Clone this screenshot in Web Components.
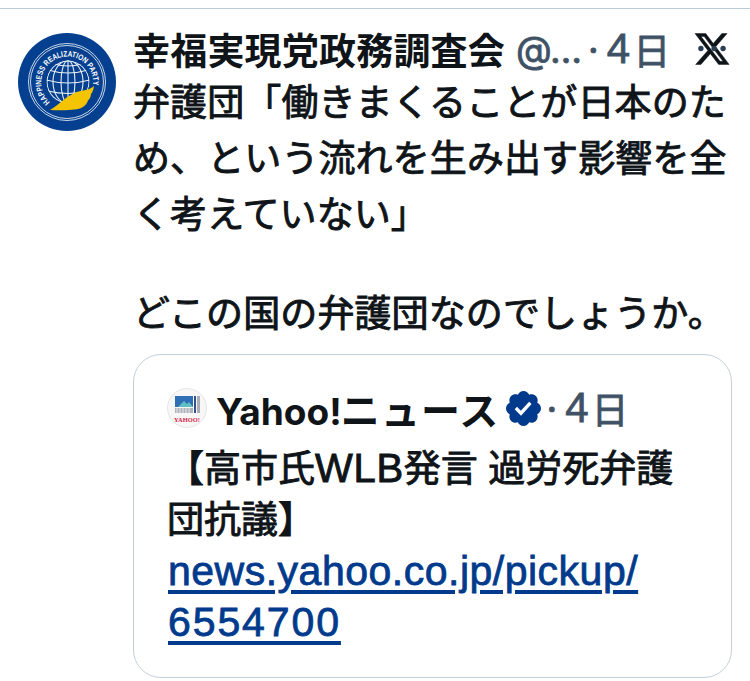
<!DOCTYPE html>
<html lang="ja">
<head>
<meta charset="utf-8">
<title>Tweet</title>
<style>
html, body { margin: 0; padding: 0; background: #fff; }
body {
    width: 750px; height: 681px; overflow: hidden;
    font-family: Inter, "Noto Sans CJK JP", sans-serif;
    color: #0f1419;
}
.latin { font-family: "Liberation Sans", sans-serif; font-size: 40px; letter-spacing: .7px; }
</style>
</head>
<body>
<tweet-card name="幸福実現党政務調査会" handle="@…" time="4日">
    弁護団「働きまくることが日本のた<br>め、という流れを生み出す影響を全<br>く考えていない」
    <p-gap></p-gap>
    どこの国の弁護団なのでしょうか。
    <quote-card slot="quote" name="ニュース" time="4日" href="news.yahoo.co.jp/pickup/|6554700">
        【高市氏<span class="latin">WLB</span>発言 過労死弁護<br>団抗議】
    </quote-card>
</tweet-card>

<script>
const BADGE = "M22.25 12c0-1.43-.88-2.67-2.19-3.34.46-1.39.2-2.9-.81-3.91s-2.52-1.27-3.91-.81c-.66-1.31-1.91-2.19-3.34-2.19s-2.67.88-3.33 2.19c-1.4-.46-2.91-.2-3.92.81s-1.26 2.52-.8 3.91c-1.31.67-2.2 1.91-2.2 3.34s.89 2.67 2.2 3.34c-.46 1.39-.21 2.9.8 3.91s2.52 1.26 3.91.81c.67 1.31 1.91 2.19 3.34 2.19s2.68-.88 3.34-2.19c1.39.45 2.9.2 3.91-.81s1.27-2.52.81-3.91c1.31-.67 2.19-1.91 2.19-3.34zm-11.71 4.2L6.8 12.46l1.41-1.42 2.26 2.26 4.8-5.23 1.47 1.36-6.2 6.77z";
const X_LOGO = "M18.244 2.25h3.308l-7.227 8.26 8.502 11.24H16.17l-5.214-6.817L4.99 21.75H1.68l7.73-8.835L1.254 2.25H8.08l4.713 6.231zm-1.161 17.52h1.833L7.084 4.126H5.117z";

class PGap extends HTMLElement {
    constructor() {
        super();
        this.attachShadow({ mode: "open" }).innerHTML = `<style>:host { display: block; height: 43px; }</style>`;
    }
}
customElements.define("p-gap", PGap);

class PartyLogo extends HTMLElement {
    constructor() {
        super();
        this.shadowDOM = this.attachShadow({ mode: "open" });
        this.shadowDOM.innerHTML = `
        <style>
        :host { display: block; width: 98px; height: 98px; flex: none; }
        svg { display: block; width: 100%; height: 100%; }
        text { font-family: "Liberation Sans", sans-serif; font-size: 8px; font-weight: 700; fill: #fff; }
        </style>
        <svg viewBox="0 0 98 98">
            <defs>
                <path id="ring" d="M32 69A26 26 0 1 1 75 53"></path>
                <clipPath id="ball"><circle cx="50" cy="49" r="21.500"></circle></clipPath>
            </defs>
            <circle cx="49" cy="49" r="49" fill="#04408f"></circle>
            <circle cx="49" cy="49" r="36.500" fill="none" stroke="#dfe8f3" stroke-width=".9"></circle>
            <circle cx="49" cy="49" r="38.500" fill="none" stroke="#dfe8f3" stroke-width=".9"></circle>
            <text><textPath href="#ring" textLength="106" lengthAdjust="spacingAndGlyphs">HAPPINESS REALIZATION PARTY</textPath></text>
            <g fill="none" stroke="#e8eff7" stroke-width="1.100" clip-path="url(#ball)">
                <circle cx="50" cy="49" r="21"></circle>
                <ellipse cx="50" cy="49" rx="7" ry="21.500"></ellipse>
                <ellipse cx="50" cy="49" rx="15" ry="21.500"></ellipse>
                <path d="M50 27V71M28 47Q50 53 72 47M30 37Q50 43 70 37M30 58Q50 63 70 58M36 31Q50 35 64 31"></path>
            </g>
            <path d="M32 77C42 71 48 63 59 59C66 57 72 57 76 53C75.500 57 74.500 59 73 61C73 64 71.500 66 70 67.500C69 70.500 67 73 64 74.500C60 77 50 77.500 32 77Z" fill="#f5c400"></path>
        </svg>`;
    }
}
customElements.define("party-logo", PartyLogo);

class YahooLogo extends HTMLElement {
    constructor() {
        super();
        this.shadowDOM = this.attachShadow({ mode: "open" });
        this.shadowDOM.innerHTML = `
        <style>
        :host { display: block; width: 40px; height: 40px; flex: none; }
        svg { display: block; width: 100%; height: 100%; }
        text { font-family: "Liberation Serif", serif; font-size: 6.400px; font-weight: 700; fill: #d5213f; }
        </style>
        <svg viewBox="0 0 40 40">
            <circle cx="20" cy="20" r="19.500" fill="#f7f7f8" stroke="#e4e6e9" stroke-width="1"></circle>
            <rect x="8" y="8" width="18" height="11" fill="#2f6fb5"></rect>
            <path d="M11 19L17 13L20 16L22 14L26 19Z" fill="#5fc0c4"></path>
            <rect x="27" y="8" width="2" height="17" fill="#33518a"></rect>
            <rect x="30" y="8" width="3" height="17" fill="#a9aeb5"></rect>
            <path d="M8 20H26V25H8Z" fill="#aeb3ba"></path>
            <path d="M10 20V25M13 20V25M16 20V25M19 20V25M22 20V25" stroke="#e8e9ec" stroke-width="1"></path>
            <text x="7" y="34" textLength="26">YAHOO!</text>
        </svg>`;
    }
}
customElements.define("yahoo-logo", YahooLogo);

class QuoteCard extends HTMLElement {
    constructor() {
        super();
        this.shadowDOM = this.attachShadow({ mode: "open" });
    }

    connectedCallback() {
        const [url1, url2] = this.getAttribute("href").split("|");
        this.shadowDOM.innerHTML = `
        <style>
        :host {
            display: block;
            width: 599px;
            box-sizing: border-box;
            height: 324px;
            border: 1px solid #c4d0d9;
            border-radius: 28px;
            padding: 33px 33px 0 33px;
        }
        .head { display: flex; align-items: center; height: 40px; white-space: nowrap; }
        .name { font-size: 37px; font-weight: 700; margin-left: 9px; }
        .kana { font-size: 39px; margin-left: -1px; letter-spacing: 1.200px; }
        .badge { width: 41px; height: 41px; margin-left: 3px; fill: #003a8c; flex: none; }
        .time { display: flex; align-items: center; font-size: 37px; color: #3f5265; -webkit-text-stroke: .8px #3f5265; margin-left: 3px; }
        .digit { font-family: "Liberation Sans", sans-serif; font-size: 42px; margin-left: 8px; margin-right: 3px; }
        .text { font-size: 37px; line-height: 51px; margin-top: 15px; -webkit-text-stroke: .9px #0f1419; }
        a {
            display: block;
            margin-top: 1px;
            margin-left: 1px;
            font-family: "Liberation Sans", sans-serif;
            font-size: 41px;
            line-height: 51px;
            color: #003a8c;
            -webkit-text-stroke: .8px #003a8c;
            text-decoration: underline;
            text-decoration-thickness: 4px;
            text-underline-offset: 5px;
            text-decoration-skip-ink: auto;
        }
        .u1 { letter-spacing: .5px; }
        .u2 { letter-spacing: 1.900px; }
        </style>
        <div class="head">
            <yahoo-logo></yahoo-logo>
            <span class="name">Yahoo!<span class="kana">${this.getAttribute("name")}</span></span>
            <svg class="badge" viewBox="0 0 24 24"><path d="${BADGE}"></path></svg>
            <span class="time"><span>·</span><span class="digit">4</span><span>日</span></span>
        </div>
        <div class="text"><slot></slot></div>
        <a href="#"><span class="u1">${url1}</span><br><span class="u2">${url2}</span></a>`;
    }
}
customElements.define("quote-card", QuoteCard);

class TweetCard extends HTMLElement {
    constructor() {
        super();
        this.shadowDOM = this.attachShadow({ mode: "open" });
    }

    connectedCallback() {
        this.shadowDOM.innerHTML = `
        <style>
        :host {
            display: flex;
            gap: 17px;
            margin-top: 8px;
            padding: 24px 18px 0;
            border-top: 1px solid #bccdd9;
        }
        .main { flex: 1; min-width: 0; }
        .head { display: flex; align-items: center; height: 36px; white-space: nowrap; margin-top: -2px; }
        .name { font-size: 37px; font-weight: 700; letter-spacing: .2px; }
        .handle, .time { font-size: 37px; color: #3f5265; -webkit-text-stroke: .8px #3f5265; }
        .handle { margin-left: 11px; }
        .time { display: flex; align-items: center; margin-left: 6px; }
        .digit { font-family: "Liberation Sans", sans-serif; font-size: 42px; margin-left: 8px; margin-right: 3px; }
        .x { width: 38px; height: 38px; margin-left: auto; margin-right: 1px; fill: #0f1419; stroke: #0f1419; stroke-width: .3; flex: none; }
        .x circle { fill: #2a3f55; stroke: none; }
        .text { font-size: 37px; line-height: 56px; margin-top: 8px; -webkit-text-stroke: .9px #0f1419; letter-spacing: .1px; }
        ::slotted(quote-card) { margin-top: 12px; }
        </style>
        <party-logo></party-logo>
        <div class="main">
            <div class="head">
                <span class="name">${this.getAttribute("name")}</span>
                <span class="handle">${this.getAttribute("handle")}</span>
                <span class="time"><span>·</span><span class="digit">4</span><span>日</span></span>
                <svg class="x" viewBox="0 0 24 24">
                    <path d="${X_LOGO}"></path>
                    <circle cx="5" cy="11.700" r="1.700"></circle>
                    <circle cx="13.300" cy="11.700" r="1.700"></circle>
                    <circle cx="19" cy="11.700" r="1.700"></circle>
                </svg>
            </div>
            <div class="text"><slot></slot></div>
            <slot name="quote"></slot>
        </div>`;
    }
}
customElements.define("tweet-card", TweetCard);
</script>
</body>
</html>
